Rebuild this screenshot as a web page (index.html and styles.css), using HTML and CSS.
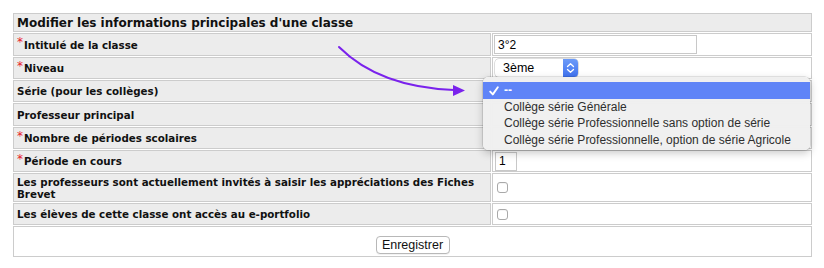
FILE: index.html
```html
<!DOCTYPE html>
<html lang="fr">
<head>
<meta charset="utf-8">
<title>Modifier une classe</title>
<link rel="stylesheet" href="styles.css">
</head>
<body>
<div class="page">
  <div class="form-grid">
    <div class="cell head">Modifier les informations principales d'une classe</div>

    <div class="cell label"><span class="req">*</span>Intitulé de la classe</div>
    <div class="cell value"><input class="text-input" type="text" value="3°2"></div>

    <div class="cell label"><span class="req">*</span>Niveau</div>
    <div class="cell value">
      <div class="mac-select"><span class="sel-text">3ème</span><span class="sel-btn"><svg width="9" height="12" viewBox="0 0 9 12"><path d="M1.5 4.5 L4.5 1.8 L7.5 4.5 M1.5 7.5 L4.5 10.2 L7.5 7.5" fill="none" stroke="#fff" stroke-width="1.3" stroke-linecap="round" stroke-linejoin="round"/></svg></span></div>
    </div>

    <div class="cell label">Série (pour les collèges)</div>
    <div class="cell value"></div>

    <div class="cell label">Professeur principal</div>
    <div class="cell value"></div>

    <div class="cell label"><span class="req">*</span>Nombre de périodes scolaires</div>
    <div class="cell value"></div>

    <div class="cell label"><span class="req">*</span>Période en cours</div>
    <div class="cell value"><input class="small-input" type="text" value="1"></div>

    <div class="cell label">Les professeurs sont actuellement invités à saisir les appréciations des Fiches Brevet</div>
    <div class="cell value"><span class="checkbox"></span></div>

    <div class="cell label">Les élèves de cette classe ont accès au e-portfolio</div>
    <div class="cell value"><span class="checkbox"></span></div>

    <div class="cell foot"><button class="btn" type="button">Enregistrer</button></div>
  </div>

  <div class="popup">
    <div class="opt selected"><svg class="check" width="10" height="10" viewBox="0 0 10 10"><path d="M1.2 5.6 L3.8 8.4 L8.8 1.2" fill="none" stroke="#fff" stroke-width="1.9" stroke-linecap="round" stroke-linejoin="round"/></svg>--</div>
    <div class="opt">Collège série Générale</div>
    <div class="opt">Collège série Professionnelle sans option de série</div>
    <div class="opt">Collège série Professionnelle, option de série Agricole</div>
  </div>

  <svg class="arrow" width="160" height="60" viewBox="0 0 160 60">
    <path d="M5 5 Q 45 45 120 48" fill="none" stroke="#7a22ec" stroke-width="2" stroke-linecap="round"/>
    <path d="M119 43 L131 48.5 L119 54 Z" fill="#7a22ec"/>
  </svg>
</div>
</body>
</html>
```

FILE: styles.css
```css
html, body {
  margin: 0;
  padding: 0;
  background: #fff;
}

.page {
  position: relative;
  padding: 13px 0 0 13px;
  font-family: "DejaVu Sans", Verdana, sans-serif;
}

.form-grid {
  display: grid;
  grid-template-columns: 478px 320px;
  grid-template-rows: 19px 23px 22px 22px 23px 22px 22px 29px 22px 31px;
  gap: 1px;
  width: 799px;
}

.cell {
  box-sizing: border-box;
  border: 1px solid #cccccc;
  display: flex;
  align-items: center;
}

.head {
  grid-column: 1 / 3;
  background: #ececec;
  font-weight: bold;
  font-size: 12px;
  padding-left: 3px;
  color: #111;
}

.label {
  background: #ececec;
  font-weight: bold;
  font-size: 10.3px;
  padding-left: 3px;
  color: #111;
  line-height: 12px;
}

.req {
  color: #e8202a;
  font-weight: normal;
  font-size: 12px;
  align-self: flex-start;
  margin-top: 2px;
  margin-right: 1px;
  line-height: 12px;
}

.value {
  background: #fff;
  padding-left: 1px;
}

.foot {
  grid-column: 1 / 3;
  background: #fff;
  justify-content: center;
  align-items: flex-end;
  padding-bottom: 2px;
}

.text-input {
  box-sizing: border-box;
  width: 203px;
  height: 19px;
  border: 1px solid #c8c8c8;
  padding: 0 3px;
  font-family: "Liberation Sans", Arial, sans-serif;
  font-size: 12px;
  color: #000;
  outline: none;
}

.small-input {
  box-sizing: border-box;
  width: 22px;
  height: 19px;
  margin-left: 1px;
  border: 1px solid #c8c8c8;
  padding: 0 3px;
  font-family: "Liberation Sans", Arial, sans-serif;
  font-size: 12px;
  color: #000;
  outline: none;
}

.mac-select {
  box-sizing: border-box;
  width: 83px;
  height: 18px;
  margin-left: 1px;
  display: flex;
  align-items: stretch;
  border-radius: 4px;
  background: #fff;
  box-shadow: 0 0 0 0.5px #bdbdbd, 0 1px 1px rgba(0,0,0,0.15);
  overflow: hidden;
  font-family: "Liberation Sans", Arial, sans-serif;
  font-size: 12.5px;
}

.sel-text {
  flex: 1;
  display: flex;
  align-items: center;
  padding-left: 8px;
  color: #000;
}

.sel-btn {
  width: 15px;
  display: flex;
  align-items: center;
  justify-content: center;
  background: linear-gradient(#6c9bf8, #3f72ef);
}

.checkbox {
  display: inline-block;
  box-sizing: border-box;
  width: 11px;
  height: 11px;
  margin-left: 3px;
  border: 1px solid #a9a9a9;
  border-radius: 3px;
  background: #fff;
  box-shadow: inset 0 1px 0 rgba(0,0,0,0.04);
}

.btn {
  box-sizing: border-box;
  width: 74px;
  height: 18px;
  padding: 0;
  border: 1px solid #b8b8b8;
  border-radius: 4px;
  background: #fff;
  font-family: "Liberation Sans", Arial, sans-serif;
  font-size: 12.5px;
  color: #111;
  box-shadow: 0 1px 0 rgba(0,0,0,0.05);
}

.popup {
  position: absolute;
  left: 483px;
  top: 77px;
  width: 327px;
  height: 73px;
  box-sizing: border-box;
  padding-top: 5px;
  background: rgba(240,240,240,0.98);
  border-radius: 5px;
  box-shadow: 0 0 0 0.5px rgba(0,0,0,0.18), 0 3px 8px rgba(0,0,0,0.22);
  font-family: "Liberation Sans", Arial, sans-serif;
  font-size: 12px;
  color: #2e2e2e;
}

.opt {
  height: 16.5px;
  line-height: 16.5px;
  padding-left: 21px;
  position: relative;
  white-space: nowrap;
}

.opt.selected {
  background: #5f84f7;
  color: #fff;
  font-weight: bold;
}

.check {
  position: absolute;
  left: 6px;
  top: 4px;
}

.arrow {
  position: absolute;
  left: 334px;
  top: 42px;
  overflow: visible;
}
```
